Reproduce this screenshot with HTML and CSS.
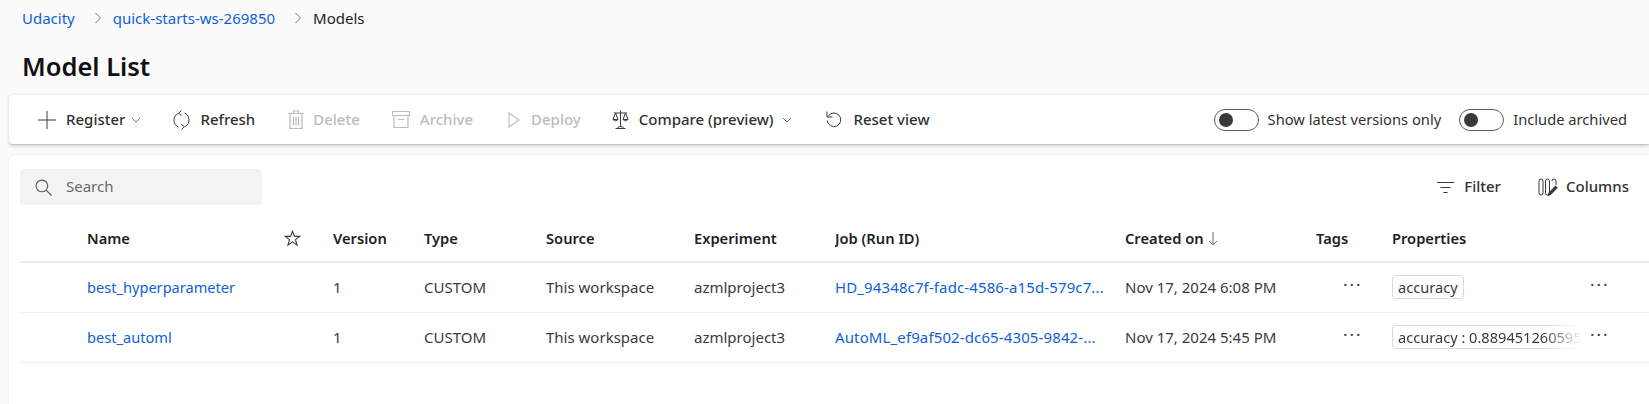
FILE: index.html
```html
<!DOCTYPE html>
<html lang="en">
<head>
<meta charset="utf-8">
<title>Model List</title>
<link rel="stylesheet" href="styles.css">
</head>
<body>
<nav class="crumbs">
  <a class="link">Udacity</a>
  <svg class="crumb-sep" viewBox="0 0 8 12"><path d="M1.500 1 6.500 6 1.500 11"/></svg>
  <a class="link">quick-starts-ws-269850</a>
  <svg class="crumb-sep" viewBox="0 0 8 12"><path d="M1.500 1 6.500 6 1.500 11"/></svg>
  <span class="crumb-current">Models</span>
</nav>
<h1 class="title">Model List</h1>
<section class="toolbar">
  <button class="tool tool-register">
    <svg class="ico" viewBox="0 0 18 18"><path d="M9 0v18M0 9h18"/></svg><span>Register</span>
    <svg class="caret" viewBox="0 0 10 6"><path d="M1 1l4 4 4-4"/></svg>
  </button>
  <button class="tool tool-refresh">
    <svg class="ico ico-refresh" viewBox="0 0 19 20"><path d="M6 3.500A7.500 7.500 0 0 0 6.500 17M13 16.500A7.500 7.500 0 0 0 12.500 3M9.500.5 6.500 3.300l3 2.200M9.500 19.500l3-2.800-3-2.200"/></svg><span>Refresh</span>
  </button>
  <button class="tool tool-delete off">
    <svg class="ico ico-delete" viewBox="0 0 16 19"><path d="M.5 3.500h15M2 3.500v15h12v-15M5.500 3.500V1h5v2.500M5.500 6.500v9M8 6.500v9M10.500 6.500v9"/></svg><span>Delete</span>
  </button>
  <button class="tool tool-archive off">
    <svg class="ico ico-archive" viewBox="0 0 18 17"><path d="M.5.500h17v4H.5zM2 4.500v12h14v-12M6 8.500h6"/></svg><span>Archive</span>
  </button>
  <button class="tool tool-deploy off">
    <svg class="ico ico-play" viewBox="0 0 12 16"><path d="M1 1v14l10-7z"/></svg><span>Deploy</span>
  </button>
  <button class="tool tool-compare">
    <svg class="ico ico-compare" viewBox="0 0 17 19"><path d="M8.500.5v16M3.500 18.500h10M5.500 18.500q0-2 3-2t3 2M2 3h13M3.500 3 1 9.500h5zM13.500 3 11 9.500h5zM1 9.500q2.500 3 5 0M11 9.500q2.500 3 5 0"/></svg><span>Compare (preview)</span>
    <svg class="caret caret-wide" viewBox="0 0 10 6"><path d="M1 1l4 4 4-4"/></svg>
  </button>
  <button class="tool tool-reset">
    <svg class="ico ico-reset" viewBox="0 0 16 17"><path d="M1 .5v5.500h5.500M2 5.500a6.800 6.800 0 1 1-.8 4"/></svg><span>Reset view</span>
  </button>
  <div class="toggles">
    <label class="toggle"><span class="switch"><i class="knob"></i></span><span class="toggle-text">Show latest versions only</span></label>
    <label class="toggle"><span class="switch"><i class="knob"></i></span><span class="toggle-text">Include archived</span></label>
  </div>
</section>
<main class="card">
  <div class="card-top">
    <div class="search">
      <svg class="search-ico" viewBox="0 0 16 16"><circle cx="6.500" cy="6.500" r="5.500"/><path d="M10.500 10.500 15.500 15.500"/></svg>
      <span>Search</span>
    </div>
    <div class="actions">
      <button class="tool tool-filter"><svg class="ico ico-filter" viewBox="0 0 17 11"><path d="M0 .5h17M3.500 5.500h10M6.500 10.500h4"/></svg><span>Filter</span></button>
      <button class="tool tool-columns"><svg class="ico ico-cols" viewBox="0 0 20 19"><path d="M1 3a2 2 0 0 1 4 0v12a2 2 0 0 1-4 0zM7.500 3a2 2 0 0 1 4 0v12a2 2 0 0 1-4 0zM14 3a2 2 0 0 1 4 0v4"/><path class="solid" d="M17.500 7.500l2.300 2.300-7 7.200-3.300 1.200 1-3.500z"/></svg><span>Columns</span></button>
    </div>
  </div>
  <table class="grid">
    <colgroup>
      <col class="c-name"><col class="c-star"><col class="c-version"><col class="c-type"><col class="c-source"><col class="c-exp"><col class="c-job"><col class="c-created"><col class="c-tags"><col class="c-props"><col class="c-more">
    </colgroup>
    <thead>
      <tr>
        <th>Name</th>
        <th><svg class="star" viewBox="0 0 16 16"><path d="M8 1.200 9.800 6h5l-4 3.100 1.500 5.100L8 11.200l-4.300 3 1.500-5.100-4-3.100h5z"/></svg></th>
        <th>Version</th>
        <th>Type</th>
        <th>Source</th>
        <th>Experiment</th>
        <th>Job (Run ID)</th>
        <th>Created on <svg class="sort" viewBox="0 0 10 14"><path d="M5 0v13M1 9l4 4 4-4"/></svg></th>
        <th>Tags</th>
        <th>Properties</th>
        <th></th>
      </tr>
    </thead>
    <tbody>
      <tr>
        <td class="cell-name"><a class="link">best_hyperparameter</a></td><td></td><td>1</td><td>CUSTOM</td><td>This workspace</td><td>azmlproject3</td>
        <td class="cell-job"><a class="link">HD_94348c7f-fadc-4586-a15d-579c7...</a></td><td>Nov 17, 2024 6:08 PM</td>
        <td class="dots dots-tags">···</td>
        <td><span class="pill">accuracy</span></td>
        <td class="dots">···</td>
      </tr>
      <tr>
        <td class="cell-name"><a class="link">best_automl</a></td><td></td><td>1</td><td>CUSTOM</td><td>This workspace</td><td>azmlproject3</td>
        <td class="cell-job"><a class="link">AutoML_ef9af502-dc65-4305-9842-...</a></td><td>Nov 17, 2024 5:45 PM</td>
        <td class="dots dots-tags">···</td>
        <td><span class="pill pill-long">accuracy : 0.889451260595</span></td>
        <td class="dots">···</td>
      </tr>
    </tbody>
  </table>
</main>
</body>
</html>
```

FILE: styles.css
```css
* { box-sizing: border-box; }
html, body { margin: 0; height: 404px; overflow: hidden; }
body {
  background: #fafafa;
  font-family: "Noto Sans", "Open Sans", sans-serif;
  font-size: 15px;
  color: #323130;
}
.link { color: #0f62d6; text-decoration: none; }
.crumbs { display: flex; align-items: center; height: 35px; padding-left: 22px; }
.crumb-sep { width: 8px; height: 12px; margin: 0 11px 0 19px; fill: none; stroke: #777; stroke-width: 1; }
.crumb-current { color: #201f1e; }
.title { margin: 13px 0 0 22px; height: 47px; font-size: 25.5px; line-height: 36px; font-weight: 600; color: #111; }
.toolbar {
  display: flex; align-items: center; height: 49px; margin-left: 9px; padding-left: 29px;
  background: #fff; border-radius: 4px 0 0 4px;
  box-shadow: 0 1.6px 3.6px rgba(0,0,0,.16), 0 .3px .9px rgba(0,0,0,.1);
}
button.tool {
  display: flex; align-items: center; padding: 0; border: 0; background: none;
  font: inherit; font-weight: 500; color: #323130;
}
button.tool span { margin-top: -2px; }
.tool.off { color: #bdbcbb; }
.ico { width: 18px; height: 18px; margin-right: 9px; fill: none; stroke: #3b3a39; stroke-width: 1; flex: none; }
.off .ico { stroke: #bdbcbb; stroke-width: 1.2; }
.caret { width: 10px; height: 6px; margin-left: 6px; fill: none; stroke: #777; stroke-width: 1; }
.caret-wide { margin-left: 9px; }
.ico-refresh { width: 19px; height: 20px; }
.ico-delete { width: 16px; height: 19px; margin-right: 9px; }
.ico-archive { height: 17px; margin-right: 10px; }
.ico-play { width: 12px; height: 16px; margin-right: 11px; }
.ico-compare { width: 17px; height: 19px; margin-right: 10px; }
.ico-reset { width: 16px; height: 17px; margin-right: 11px; }
.tool-register .ico { margin-right: 10px; }
.tool-refresh { margin-left: 31px; }
.tool-delete { margin-left: 33px; }
.tool-archive { margin-left: 32px; }
.tool-deploy { margin-left: 35px; }
.tool-compare { margin-left: 31px; }
.tool-reset { margin-left: 34px; }
.toggles { display: flex; margin-left: auto; margin-right: 22px; gap: 18px; }
.toggle { display: flex; align-items: center; gap: 9px; color: #323130; }
.toggle-text { font-size: 14.7px; margin-top: -2px; }
.switch { display: flex; align-items: center; width: 45px; height: 22px; padding-left: 4px; border: 1px solid #605e5c; border-radius: 11px; background: #fff; }
.knob { width: 14px; height: 14px; border-radius: 50%; background: #3b3a39; }
.card {
  height: 260px; margin: 11px 0 0 9px; padding: 14px 0 0 11px;
  background: #fff; border-radius: 6px 0 0 0;
  box-shadow: 0 .3px 1.5px rgba(0,0,0,.12);
}
.card-top { display: flex; align-items: center; justify-content: space-between; height: 36px; }
.search { display: flex; align-items: center; width: 242px; height: 36px; padding-left: 15px; border-radius: 4px; background: #f3f3f3; color: #6b6a69; }
.search span { margin-top: -2px; }
.search-ico { width: 17px; height: 17px; margin-right: 14px; fill: none; stroke: #605e5c; stroke-width: 1.1; }
.actions { display: flex; align-items: center; margin-right: 20px; }
.ico-filter { width: 17px; height: 11px; margin-right: 10px; }
.ico-cols { width: 20px; height: 19px; margin-right: 8px; }
.ico-cols .solid { fill: #3b3a39; stroke: none; }
.tool-columns { margin-left: 37px; }
.grid { width: 1629px; border-collapse: collapse; table-layout: fixed; }
.c-name { width: 264px; } .c-star { width: 49px; } .c-version { width: 91px; } .c-type { width: 122px; }
.c-source { width: 148px; } .c-exp { width: 141px; } .c-job { width: 290px; } .c-created { width: 191px; }
.c-tags { width: 76px; } .c-props { width: 198px; } .c-more { width: 59px; }
th, td { padding: 0; text-align: left; white-space: nowrap; vertical-align: middle; overflow: hidden; }
th { height: 57px; padding-top: 9px; font-size: 14.7px; font-weight: 600; color: #201f1e; border-bottom: 2px solid #edebe9; }
td { height: 50px; border-bottom: 1px solid #f1efee; color: #3b3a39; }
th:first-child, td:first-child { padding-left: 67px; }
.cell-name .link { font-size: 14.6px; }
.cell-job .link { letter-spacing: .12px; }
.star { width: 17px; height: 17px; fill: none; stroke: #3b3a39; stroke-width: 1; vertical-align: -3px; }
.sort { width: 10px; height: 14px; margin-left: 1px; fill: none; stroke: #6d6c6b; stroke-width: 1; vertical-align: -2px; }
.dots { font-size: 17px; letter-spacing: 2px; line-height: 16px; color: #3b3a39; padding-bottom: 5px; }
.dots-tags { padding-left: 27px; }
.pill { display: inline-block; max-width: 190px; height: 24px; padding: 0 5px; font-size: 14.6px; line-height: 22px; border: 1px solid #dcdad8; border-radius: 3px; overflow: hidden; vertical-align: middle; }
.pill-long { width: 190px; border-right: 0; -webkit-mask-image: linear-gradient(to right, #000 80%, transparent 100%); mask-image: linear-gradient(to right, #000 80%, transparent 100%); }
```
